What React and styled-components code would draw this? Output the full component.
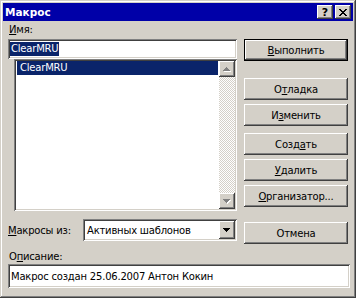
import React from 'react';
import styled, { createGlobalStyle } from 'styled-components';

const GlobalStyle = createGlobalStyle`
  html, body {
    margin: 0;
    padding: 0;
    background: #d4d0c8;
  }
  body {
    font-family: "DejaVu Sans", "Liberation Sans", sans-serif;
    font-size: 10px;
    letter-spacing: -0.2px;
    color: #000;
  }
`;

const raised = `
  box-shadow: inset -1px -1px #404040, inset 1px 1px #fff,
    inset -2px -2px #808080, inset 2px 2px #d4d0c8;
`;

const sunken = `
  box-shadow: inset 1px 1px #808080, inset -1px -1px #fff,
    inset 2px 2px #404040, inset -2px -2px #d4d0c8;
`;

const Window = styled.div`
  width: 356px;
  height: 298px;
  box-sizing: border-box;
  padding: 3px;
  background: #d4d0c8;
  display: flex;
  flex-direction: column;
  box-shadow: inset -1px -1px #404040, inset 1px 1px #d4d0c8,
    inset -2px -2px #808080, inset 2px 2px #fff;
`;

const TitleBar = styled.div`
  height: 18px;
  flex: none;
  display: flex;
  align-items: center;
  padding: 0 2px;
  background: #0000a8;
  color: #fff;
  font-weight: bold;
  font-size: 10.5px;
  letter-spacing: 0;
`;

const Title = styled.span`
  flex: 1;
`;

const CaptionButton = styled.div`
  width: 16px;
  height: 14px;
  box-sizing: border-box;
  margin-left: ${p => p.gap || 0}px;
  background: #d4d0c8;
  color: #000;
  font-size: 11px;
  font-weight: bold;
  display: flex;
  align-items: center;
  justify-content: center;
  ${raised}
`;

const Body = styled.div`
  flex: 1;
  padding: 0 3px 0 5px;
  display: flex;
  flex-direction: column;
`;

const TopGrid = styled.div`
  display: grid;
  grid-template-columns: 229px 104px;
  column-gap: 7px;
  align-items: start;
`;

const LeftCol = styled.div`
  display: flex;
  flex-direction: column;
`;

const RightCol = styled.div`
  display: flex;
  flex-direction: column;
  padding-top: 18px;
`;

const Label = styled.div`
  height: ${p => p.h || 18}px;
  box-sizing: border-box;
  padding: ${p => p.pt ?? 3}px 0 0 1px;
  line-height: 12px;
  white-space: nowrap;
`;

const Key = styled.u`
  text-decoration: underline;
  text-underline-offset: 1px;
`;

const Field = styled.div`
  height: ${p => p.h}px;
  box-sizing: border-box;
  padding: 2px 2px 2px 3px;
  background: #fff;
  display: flex;
  align-items: center;
  white-space: nowrap;
  ${sunken}
`;

const Selected = styled.span`
  background: #0a246a;
  color: #fff;
  line-height: 14px;
  padding: 0 1px;
  margin-left: -1px;
`;

const ListBox = styled.div`
  height: 152px;
  margin-left: 6px;
  box-sizing: border-box;
  padding: 2px;
  background: #fff;
  display: flex;
  ${sunken}
`;

const Items = styled.div`
  flex: 1;
  padding: 0 1px 0 1px;
`;

const Item = styled.div`
  height: 14px;
  line-height: 14px;
  padding-left: 3px;
  background: ${p => (p.active ? '#0a246a' : 'transparent')};
  color: ${p => (p.active ? '#fff' : '#000')};
`;

const ScrollBar = styled.div`
  width: 16px;
  display: flex;
  flex-direction: column;
`;

const ArrowButton = styled.div`
  width: 16px;
  height: ${p => p.h || 16}px;
  flex: none;
  box-sizing: border-box;
  background: #d4d0c8;
  display: flex;
  align-items: center;
  justify-content: center;
  ${raised}
`;

const Track = styled.div`
  flex: 1;
  background: repeating-conic-gradient(#fff 0 25%, #d4d0c8 0 50%) 0 0 / 2px 2px;
`;

const ComboRow = styled.div`
  margin-top: 8px;
  display: flex;
  align-items: center;
  justify-content: space-between;
`;

const Combo = styled.div`
  width: 154px;
  height: 22px;
  box-sizing: border-box;
  padding: 2px;
  background: #fff;
  display: flex;
  align-items: center;
  ${sunken}
`;

const ComboText = styled.span`
  flex: 1;
  padding-left: 2px;
  white-space: nowrap;
`;

const Button = styled.div`
  height: 22px;
  box-sizing: border-box;
  margin-top: ${p => p.gap || 0}px;
  background: #d4d0c8;
  display: flex;
  align-items: center;
  justify-content: center;
  white-space: nowrap;
  ${p =>
    p.primary
      ? `border: 1px solid #000;
         box-shadow: inset -1px -1px #404040, inset 1px 1px #fff,
           inset -2px -2px #808080;`
      : raised}
`;

const Description = styled.div`
  display: flex;
  flex-direction: column;
  width: 342px;
`;

const CloseGlyph = () => {
  const rows = ['xx....xx', '.xx..xx.', '..xxxx..', '...xx...', '..xxxx..', '.xx..xx.', 'xx....xx'];
  return (
    <svg width="8" height="7" shapeRendering="crispEdges">
      {rows.flatMap((r, y) =>
        r.split('').map((c, x) => (c === 'x' ? <rect key={x + '-' + y} x={x} y={y} width="1" height="1" fill="#000" /> : null))
      )}
    </svg>
  );
};

const Arrow = ({ down, disabled }) => {
  const tri = down ? '0,0 7,0 3.5,4' : '3.5,0 7,4 0,4';
  return (
    <svg width="8" height="5" shapeRendering="crispEdges">
      {disabled && <polygon points={tri} fill="#fff" transform="translate(1,1)" />}
      <polygon points={tri} fill={disabled ? '#808080' : '#000'} />
    </svg>
  );
};

const App = () => {
  return (
    <>
      <GlobalStyle />
      <Window>
        <TitleBar>
          <Title>Макрос</Title>
          <CaptionButton>?</CaptionButton>
          <CaptionButton gap={2}>
            <CloseGlyph />
          </CaptionButton>
        </TitleBar>
        <Body>
          <TopGrid>
            <LeftCol>
              <Label>
                <Key>И</Key>мя:
              </Label>
              <Field h={20}>
                <Selected>ClearMRU</Selected>
              </Field>
              <ListBox>
                <Items>
                  <Item active>ClearMRU</Item>
                </Items>
                <ScrollBar>
                  <ArrowButton>
                    <Arrow disabled />
                  </ArrowButton>
                  <Track />
                  <ArrowButton>
                    <Arrow down disabled />
                  </ArrowButton>
                </ScrollBar>
              </ListBox>
              <ComboRow>
                <span>
                  <Key>М</Key>акросы из:
                </span>
                <Combo>
                  <ComboText>Активных шаблонов</ComboText>
                  <ArrowButton h={18}>
                    <Arrow down />
                  </ArrowButton>
                </Combo>
              </ComboRow>
            </LeftCol>
            <RightCol>
              <Button primary>
                <span>
                  <Key>В</Key>ыполнить
                </span>
              </Button>
              <Button gap={17}>
                <span>
                  О<Key>т</Key>ладка
                </span>
              </Button>
              <Button gap={4}>
                <span>
                  И<Key>з</Key>менить
                </span>
              </Button>
              <Button gap={7}>
                <span>
                  Созд<Key>а</Key>ть
                </span>
              </Button>
              <Button gap={4}>
                <span>
                  <Key>У</Key>далить
                </span>
              </Button>
              <Button gap={4}>
                <span>
                  <Key>О</Key>рганизатор...
                </span>
              </Button>
              <Button gap={15}>Отмена</Button>
            </RightCol>
          </TopGrid>
          <Description>
            <Label h={20} pt={7}>
              О<Key>п</Key>исание:
            </Label>
            <Field h={24}>Макрос создан 25.06.2007 Антон Кокин</Field>
          </Description>
        </Body>
      </Window>
    </>
  );
};

export default App;
